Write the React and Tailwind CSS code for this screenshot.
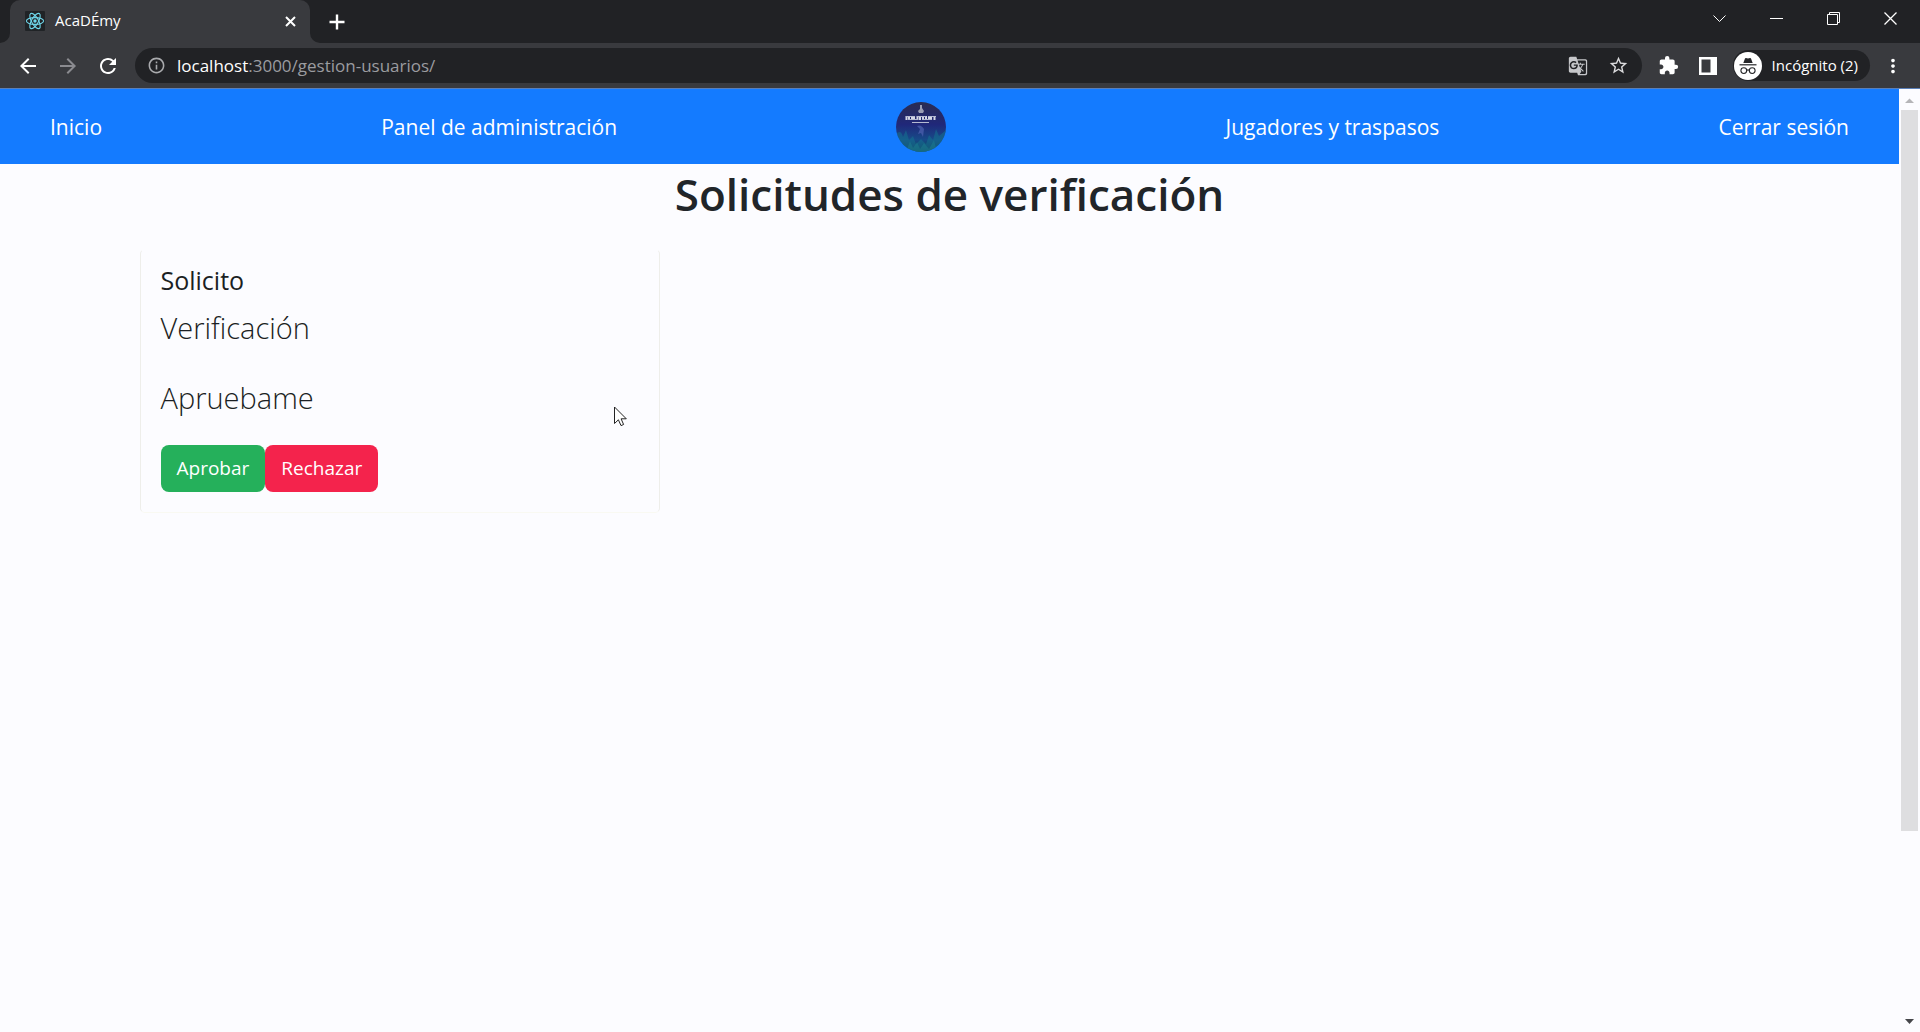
import React from "react";
import { MdArrowBack, MdArrowForward, MdExtension, MdGTranslate, MdInfoOutline, MdMoreVert, MdRefresh, MdStarBorder } from "react-icons/md";

function ReactFavicon() {
  return (
    <svg className="size-5 shrink-0" viewBox="0 0 20 20" aria-hidden="true">
      <rect width="20" height="20" rx="1" fill="#202326" />
      <g fill="none" stroke="#6fd6ea" strokeWidth="1.1">
        <ellipse cx="10" cy="10" rx="8.6" ry="3.4" />
        <ellipse cx="10" cy="10" rx="8.6" ry="3.4" transform="rotate(60 10 10)" />
        <ellipse cx="10" cy="10" rx="8.6" ry="3.4" transform="rotate(120 10 10)" />
      </g>
      <circle cx="10" cy="10" r="1.7" fill="#6fd6ea" />
    </svg>
  );
}

function TabFlare({ flip }) {
  return (
    <svg className="size-[10px] shrink-0 self-end" viewBox="0 0 10 10" aria-hidden="true">
      <path d={flip ? "M0 0A10 10 0 0 0 10 10H0z" : "M10 0A10 10 0 0 1 0 10H10z"} fill="#393a3e" />
    </svg>
  );
}

const windowControls = [
  { label: "Buscar pestañas", shape: <path d="M0.5 3.5 6.5 9.5 12.5 3.5" /> },
  { label: "Minimizar", shape: <path d="M0 6.5H13" /> },
  { label: "Restaurar", shape: <path d="M0.5 2.5H10.5V12.5H0.5zM2.5 2.5V0.5H12.5V10.5H10.5" /> },
  { label: "Cerrar", shape: <path d="M0.5 0.5 12.5 12.5M12.5 0.5 0.5 12.5" strokeWidth="1.3" /> },
];

function TabStrip() {
  return (
    <div className="flex h-[43px] items-center bg-[#212225] text-white">
      <div className="flex h-full">
        <TabFlare />
        <div className="flex w-[300px] items-center rounded-t-[10px] bg-[#393a3e] pr-3 pb-px pl-[15px]">
          <ReactFavicon />
          <span className="ml-[10px] flex-1 pb-[2px] text-[15px] leading-5">AcaDÉmy</span>
          <button type="button" aria-label="Cerrar pestaña" className="grid size-4 place-items-center">
            <svg className="size-[11px]" viewBox="0 0 11 11" stroke="currentColor" strokeWidth="2">
              <path d="M1 1 10 10M10 1 1 10" />
            </svg>
          </button>
        </div>
        <TabFlare flip />
      </div>
      <button type="button" aria-label="Nueva pestaña" className="ml-[9px] grid size-4 place-items-center">
        <svg className="size-4" viewBox="0 0 16 16" stroke="currentColor" strokeWidth="2.4">
          <path d="M8 0.5V15.5M0.5 8H15.5" />
        </svg>
      </button>
      <div className="ml-auto flex h-[37px] self-start pr-px">
        {windowControls.map((c) => (
          <button key={c.label} type="button" aria-label={c.label} className="grid w-[57px] place-items-center">
            <svg className="size-[13px]" viewBox="0 0 13 13" fill="none" stroke="currentColor">
              {c.shape}
            </svg>
          </button>
        ))}
      </div>
    </div>
  );
}

function IncognitoAvatar() {
  return (
    <svg className="size-7 shrink-0" viewBox="0 0 28 28" aria-hidden="true">
      <circle cx="14" cy="14" r="14" fill="#fff" />
      <path d="M9.3 11 11 6.6Q11.3 6 12 6.1L14 6.5 16 6.1Q16.8 6 17 6.6L18.7 11z" fill="#26272a" />
      <path d="M5.5 12.8H22.5" stroke="#26272a" strokeWidth="1.2" />
      <g fill="none" stroke="#26272a" strokeWidth="1.1">
        <circle cx="9.8" cy="18.6" r="2.9" />
        <circle cx="18.2" cy="18.6" r="2.9" />
        <path d="M12.7 18.3Q14 17.4 15.3 18.3" />
      </g>
    </svg>
  );
}

function Toolbar() {
  return (
    <div className="flex h-[45px] items-center bg-[#393a3e] pr-4 pl-4 text-white">
      <div className="flex shrink-0 gap-4">
        <button type="button" aria-label="Atrás"><MdArrowBack className="size-6" /></button>
        <button type="button" aria-label="Adelante" className="text-[#8b8b90]"><MdArrowForward className="size-6" /></button>
        <button type="button" aria-label="Recargar"><MdRefresh className="size-6" /></button>
      </div>
      <div className="ml-[15px] flex h-[35px] flex-1 items-center rounded-full bg-[#212225] pr-[13px] pl-3">
        <MdInfoOutline className="size-[19px] shrink-0 text-[#a9aaad]" />
        <a href="#url" className="ml-[11px] flex-1 text-[17px] leading-6 text-[#9b9ca0]">
          <span className="text-white">localhost</span>:3000/gestion-usuarios/
        </a>
        <button type="button" aria-label="Traducir" className="mr-5 text-[#c6c7ca]"><MdGTranslate className="size-5" /></button>
        <button type="button" aria-label="Marcador" className="text-[#dcdcde]"><MdStarBorder className="size-[21px]" /></button>
      </div>
      <button type="button" aria-label="Extensiones" className="ml-4"><MdExtension className="size-[21px]" /></button>
      <button type="button" aria-label="Panel lateral" className="ml-5">
        <svg className="size-[18px]" viewBox="0 0 18 18">
          <path d="M0 0H18V18H0zM2.5 2.5V15.5H11.5V2.5z" fill="currentColor" fillRule="evenodd" />
        </svg>
      </button>
      <button type="button" className="ml-4 flex h-[31px] items-center rounded-full bg-[#212225] pr-3 pl-px text-[15px] leading-5">
        <IncognitoAvatar />
        <span className="ml-[10px] pb-[2px]">Incógnito (2)</span>
      </button>
      <button type="button" aria-label="Menú" className="ml-3"><MdMoreVert className="size-[22px]" /></button>
    </div>
  );
}

function Crest() {
  return (
    <svg className="size-[50px]" viewBox="0 0 50 50" role="img" aria-label="Escudo">
      <defs>
        <linearGradient id="crest-fill" x1="0" y1="0" x2="0" y2="1">
          <stop offset="0" stopColor="#2a2c50" />
          <stop offset="0.45" stopColor="#20287a" />
          <stop offset="0.75" stopColor="#174a88" />
          <stop offset="1" stopColor="#123a58" />
        </linearGradient>
        <clipPath id="crest-clip"><circle cx="25" cy="25" r="25" /></clipPath>
      </defs>
      <g clipPath="url(#crest-clip)">
        <rect width="50" height="50" fill="url(#crest-fill)" />
        <path d="M0 32Q5 27 7 35L10 28 13 38 17 34 20 42 25 37 30 42 33 33 37 38 40 27 43 34 50 28V50H0z" fill="#147590" opacity="0.5" />
        <path d="M10 50 14 39 17 46 21 40 24 47 28 41 33 47 38 38 41 50z" fill="#25a0a0" opacity="0.25" />
        <path d="M21 24Q25 22 28 27L27 35 25 31 22 32 24 27z" fill="#4f62b0" opacity="0.7" />
        <path d="M24 3H26V6L28 9 27 11H23L22 9 24 7z" fill="#9a9eb4" />
        <path d="M10.5 14V18M13 14V18M16 14V17M18 14V18M21.5 14V18M24 15V18M27 14V18M30 14V18M33 14V17M35 14V18M38.5 14V18" stroke="#d4d7e6" strokeWidth="2" />
        <path d="M10 14.5H19M21 14.5H30M32 14.5H40M12 17.5H22M26 17.5H36M16 20.5H33" stroke="#b4bad2" strokeWidth="1.2" />
      </g>
    </svg>
  );
}

function Navbar() {
  return (
    <nav className="flex h-[75px] items-center justify-between bg-[#147bff] px-[50px] text-[21px] leading-8 text-white">
      <a href="#inicio">Inicio</a>
      <a href="#panel">Panel de administración</a>
      <a href="#escudo"><Crest /></a>
      <a href="#jugadores">Jugadores y traspasos</a>
      <a href="#salir">Cerrar sesión</a>
    </nav>
  );
}

function RequestCard() {
  return (
    <article className="rounded-[5px] border border-t-transparent border-r-[#eeeeea] border-b-[#f9f9f2] border-l-[#eeeeea] px-5 pt-[15px] pb-5 text-[#1b1f23]">
      <h2 className="text-[25px] leading-[30px] font-medium">Solicito</h2>
      <p className="mt-2 mb-5 text-[29px] leading-[50px] font-light">Verificación</p>
      <p className="mb-[22px] text-[29px] leading-[50px] font-light">Apruebame</p>
      <div className="flex text-[19px] leading-[47px] text-white">
        <button type="button" className="rounded-[8px] bg-[#25b05b] px-4">Aprobar</button>
        <button type="button" className="rounded-[8px] bg-[#f4234c] px-4">Rechazar</button>
      </div>
    </article>
  );
}

function Scrollbar() {
  return (
    <div className="flex w-[21px] shrink-0 flex-col bg-[#fcfcff]" aria-hidden="true">
      <svg className="h-[21px] w-full" viewBox="0 0 21 21"><path d="M6 14 10.5 9.5 15 14z" fill="#b5b5b8" /></svg>
      <div className="flex-1 px-[2px]">
        <div className="h-[80%] bg-[#dedee0]" />
      </div>
      <svg className="h-[21px] w-full" viewBox="0 0 21 21"><path d="M6 8 10.5 13 15 8z" fill="#45464a" /></svg>
    </div>
  );
}

export default function App() {
  return (
    <div className="relative flex h-screen flex-col overflow-hidden bg-[#fcfcff] font-['Open_Sans',sans-serif]">
      <header>
        <TabStrip />
        <Toolbar />
        <div className="h-px bg-[#5a7fb8]" />
      </header>
      <div className="flex min-h-0 flex-1">
        <div className="min-w-0 flex-1">
          <Navbar />
          <main>
            <h1 className="text-center text-[44px] leading-[60px] font-semibold text-[#212529]">Solicitudes de verificación</h1>
            <div className="mx-auto mt-[25px] grid max-w-[1650px] grid-cols-3 gap-x-[30px] px-[15px]">
              <RequestCard />
            </div>
          </main>
        </div>
        <Scrollbar />
      </div>
      <svg className="absolute top-[406px] left-[614px] h-[21px] w-[14px]" viewBox="0 0 14 21" aria-hidden="true">
        <path d="M0.5 1V17.5L4.4 13.8 7 19.6 9.6 18.5 7.1 12.8H12.3z" fill="#fff" stroke="#222" />
      </svg>
    </div>
  );
}
